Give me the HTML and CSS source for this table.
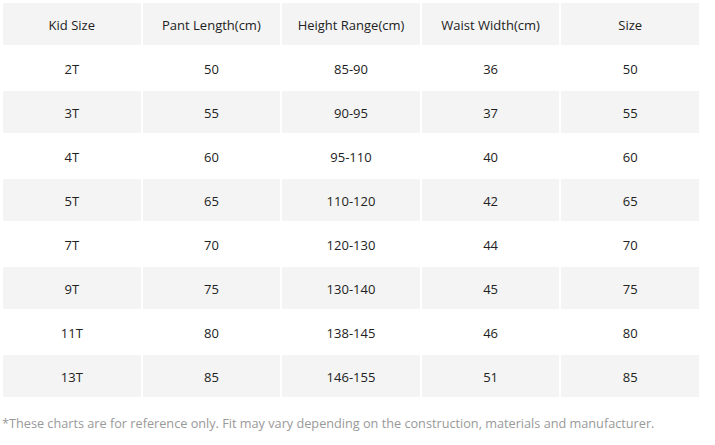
FILE: index.html
```html
<!DOCTYPE html>
<html>
<head>
<meta charset="utf-8">
<link rel="stylesheet" href="styles.css">
</head>
<body>
<div class="chart">
  <table class="size-table">
    <thead>
      <tr class="shade"><th>Kid Size</th><th>Pant Length(cm)</th><th>Height Range(cm)</th><th>Waist Width(cm)</th><th>Size</th></tr>
    </thead>
    <tbody>
      <tr><td>2T</td><td>50</td><td>85-90</td><td>36</td><td>50</td></tr>
      <tr class="shade"><td>3T</td><td>55</td><td>90-95</td><td>37</td><td>55</td></tr>
      <tr><td>4T</td><td>60</td><td>95-110</td><td>40</td><td>60</td></tr>
      <tr class="shade"><td>5T</td><td>65</td><td>110-120</td><td>42</td><td>65</td></tr>
      <tr><td>7T</td><td>70</td><td>120-130</td><td>44</td><td>70</td></tr>
      <tr class="shade"><td>9T</td><td>75</td><td>130-140</td><td>45</td><td>75</td></tr>
      <tr><td>11T</td><td>80</td><td>138-145</td><td>46</td><td>80</td></tr>
      <tr class="shade"><td>13T</td><td>85</td><td>146-155</td><td>51</td><td>85</td></tr>
    </tbody>
  </table>
  <p class="note">*These charts are for reference only. Fit may vary depending on the construction, materials and manufacturer.</p>
</div>
</body>
</html>
```
FILE: styles.css
```css
html, body {
  margin: 0;
  padding: 0;
  background: #ffffff;
}
body {
  font-family: "Open Sans", "Liberation Sans", sans-serif;
  color: #222222;
}
.chart {
  padding: 1px 14px 0 1px;
}
.size-table {
  width: 700px;
  border-collapse: separate;
  border-spacing: 2px;
  table-layout: fixed;
}
.size-table th,
.size-table td {
  box-sizing: border-box;
  height: 42px;
  padding: 2px 0 0 0;
  text-align: center;
  vertical-align: middle;
  font-size: 13px;
  font-weight: normal;
  color: #222222;
}
.size-table th {
  padding-top: 1px;
}
.shade th,
.shade td {
  background: #f4f4f4;
}
.note {
  margin: 15px 0 0 1px;
  font-size: 12.7px;
  color: #999999;
  white-space: nowrap;
}
```
